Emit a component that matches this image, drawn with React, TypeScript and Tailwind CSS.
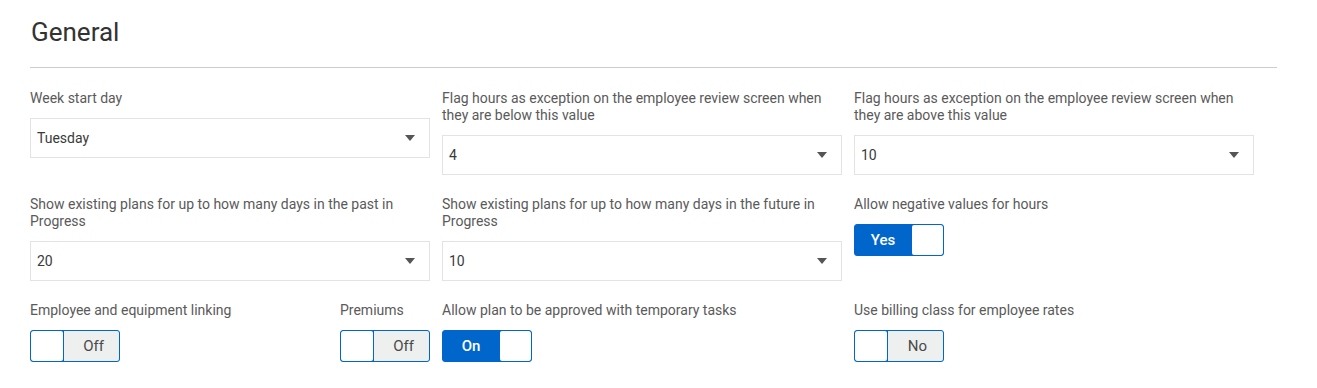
const Select = ({ value }: { value: string }) => (
    <div className="flex items-center justify-between h-[40px] w-full border border-[#e3e3e3] bg-white pl-[6px] pr-[14px]">
        <span className="text-[14px] text-[#3a3a3a]">{value}</span>
        <span className="w-0 h-0 border-l-[5px] border-r-[5px] border-t-[6px] border-l-transparent border-r-transparent border-t-[#555]" />
    </div>
)

const Toggle = ({ on, label }: { on: boolean; label: string }) => (
    <div className="flex w-[90px] h-[32px] border border-[#0066cc] rounded-[3px] overflow-hidden bg-[#0066cc]">
        {on ? (
            <>
                <div className="flex flex-1 items-center justify-center text-[15px] font-medium text-white pr-[1px]">{label}</div>
                <div className="w-[31px] h-full bg-white rounded-[2px]" />
            </>
        ) : (
            <>
                <div className="w-[32px] h-full bg-white rounded-[2px]" />
                <div className="flex flex-1 items-center justify-center text-[15px] text-[#4a4a4a] bg-[#eef0ef] ml-[1px] pl-[4px]">{label}</div>
            </>
        )}
    </div>
)

const Field = ({ label, children }: { label: string; children: React.ReactNode }) => (
    <div className="flex flex-col">
        <label className="text-[14px] leading-[17px] text-[#5a5a5a] mb-[11px]">{label}</label>
        {children}
    </div>
)

export default function App() {
    return (
        <div className="min-h-screen bg-white pl-[30px] pr-[40px] font-['Roboto',sans-serif]">
            <h1 className="pt-[14px] mb-[17px] text-[26px] leading-[36px] text-[#333] pl-px">General</h1>
            <div className="h-px bg-[#cccccc]" />

            <div className="grid grid-cols-[400px_400px_400px] gap-x-[12px] gap-y-[21px] pt-[22px]">
                <Field label="Week start day">
                    <Select value="Tuesday" />
                </Field>
                <Field label="Flag hours as exception on the employee review screen when they are below this value">
                    <Select value="4" />
                </Field>
                <Field label="Flag hours as exception on the employee review screen when they are above this value">
                    <Select value="10" />
                </Field>

                <Field label="Show existing plans for up to how many days in the past in Progress">
                    <Select value="20" />
                </Field>
                <Field label="Show existing plans for up to how many days in the future in Progress">
                    <Select value="10" />
                </Field>
                <Field label="Allow negative values for hours">
                    <Toggle on label="Yes" />
                </Field>

                <div className="flex justify-between">
                    <Field label="Employee and equipment linking">
                        <Toggle on={false} label="Off" />
                    </Field>
                    <div className="w-[90px]">
                        <Field label="Premiums">
                            <Toggle on={false} label="Off" />
                        </Field>
                    </div>
                </div>
                <Field label="Allow plan to be approved with temporary tasks">
                    <Toggle on label="On" />
                </Field>
                <Field label="Use billing class for employee rates">
                    <Toggle on={false} label="No" />
                </Field>
            </div>
        </div>
    )
}
